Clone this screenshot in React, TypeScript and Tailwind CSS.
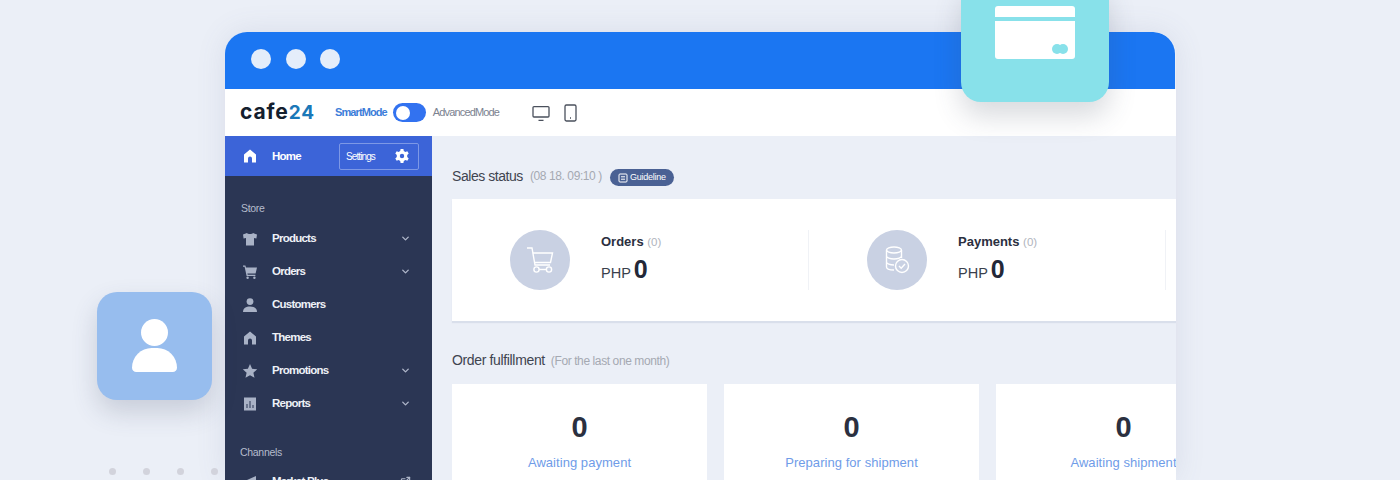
import { ChevronDown, ExternalLink } from "lucide-react";
import type { ReactNode } from "react";

const icon = "h-[16px] w-[16px] fill-[#a9b2c6]";

const HomeIcon = ({ className = icon }: { className?: string }) => (
  <svg viewBox="0 0 16 16" className={className}>
    <path d="M8 1.5 14 6.6V14.5H10V10.5A2 2 0 0 0 6 10.5V14.5H2V6.6Z" />
  </svg>
);

const ShirtIcon = () => (
  <svg viewBox="0 0 16 16" className={icon}>
    <path d="M5 2 1 3.5 1.6 7.5 4 7V14.5H12V7L14.4 7.5 15 3.5 11 2C10.4 3.4 5.6 3.4 5 2Z" />
  </svg>
);

const CartIcon = () => (
  <svg viewBox="0 0 16 16" className={icon}>
    <path d="M1 1.5H3.4L4 3.5H15L13.6 9.5H5.4L5.7 10.8H13.4V12H4.6L2.6 2.7H1Z" />
    <circle cx="5.6" cy="13.8" r="1.2" />
    <circle cx="12.4" cy="13.8" r="1.2" />
  </svg>
);

const UserIcon = () => (
  <svg viewBox="0 0 16 16" className={icon}>
    <circle cx="8" cy="4.6" r="3.4" />
    <path d="M1 15C1 11.4 4 9.6 8 9.6S15 11.4 15 15Z" />
  </svg>
);

const StarIcon = () => (
  <svg viewBox="0 0 16 16" className={icon}>
    <path d="M8 1 10.1 5.8 15.2 6.3 11.4 9.7 12.5 14.8 8 12.2 3.5 14.8 4.6 9.7 .8 6.3 5.9 5.8Z" />
  </svg>
);

const ReportIcon = () => (
  <svg viewBox="0 0 16 16" className={icon}>
    <path
      fillRule="evenodd"
      d="M2 1.5H14V14.5H2ZM4.5 8V12H5.5V8ZM7.5 5V12H8.5V5ZM10.5 9V12H11.5V9Z"
    />
  </svg>
);

const MegaphoneIcon = () => (
  <svg viewBox="0 0 16 16" className={icon}>
    <path d="M1 6H5L14 2V13L5 10H4V14H2V10H1Z" />
  </svg>
);

const GearIcon = () => (
  <svg viewBox="0 0 16 16" className="h-[16px] w-[16px] fill-white">
    <path
      fillRule="evenodd"
      d="M6.6 1H9.4L9.8 3 11.4 3.9 13.3 3.2 14.7 5.6 13.2 7V9L14.7 10.4 13.3 12.8 11.4 12.1 9.8 13 9.4 15H6.6L6.2 13 4.6 12.1 2.7 12.8 1.3 10.4 2.8 9V7L1.3 5.6 2.7 3.2 4.6 3.9 6.2 3ZM8 5.8A2.2 2.2 0 1 0 8 10.2 2.2 2.2 0 1 0 8 5.8Z"
    />
  </svg>
);

const MonitorIcon = () => (
  <svg viewBox="0 0 18 18" className="h-[18px] w-[18px]" fill="none" stroke="#4a505c" strokeWidth="1.3">
    <rect x="1" y="2.6" width="16" height="10.4" rx="1" />
    <path d="M6.5 16.4H11.5" />
  </svg>
);

const PhoneIcon = () => (
  <svg viewBox="0 0 13 18" className="h-[18px] w-[13px]" fill="none" stroke="#4a505c" strokeWidth="1.3">
    <rect x="1" y="1" width="11" height="16" rx="1.4" />
    <path d="M6 14H7" />
  </svg>
);

const BasketIcon = () => (
  <svg viewBox="0 0 30 30" className="h-[30px] w-[30px]" fill="none" stroke="white" strokeWidth="1.4">
    <path d="M2 3H7L10 20H25" />
    <path d="M7.8 8H27.5L25.5 17.5H9.4" />
    <circle cx="11.5" cy="24.5" r="2.6" />
    <circle cx="24" cy="24.5" r="2.6" />
    <path d="M14 24.5H21.4" />
  </svg>
);

const DatabaseCheckIcon = () => (
  <svg viewBox="0 0 32 32" className="h-[32px] w-[32px]" fill="none" stroke="white" strokeWidth="1.4">
    <ellipse cx="13" cy="6" rx="7.5" ry="3" />
    <path d="M5.5 6V23C5.5 24.6 8.5 26 13 26M20.5 6V14M5.5 12C5.5 13.7 9 15 13 15S20.5 13.7 20.5 12M5.5 18C5.5 19.7 9 21 13 21" />
    <circle cx="21" cy="22" r="6.5" fill="#c9d1e3" />
    <path d="M18 22 20.2 24.2 24 20" />
  </svg>
);

const GuideIcon = () => (
  <svg viewBox="0 0 10 10" className="h-[10px] w-[10px]" fill="none" stroke="white" strokeWidth="1">
    <rect x="1" y="1" width="8" height="8" rx="1" />
    <path d="M3 3.8H7M3 6.2H7" />
  </svg>
);

type NavItem = { label: string; icon: ReactNode; more?: boolean };

const storeItems: NavItem[] = [
  { label: "Products", icon: <ShirtIcon />, more: true },
  { label: "Orders", icon: <CartIcon />, more: true },
  { label: "Customers", icon: <UserIcon /> },
  { label: "Themes", icon: <HomeIcon /> },
  { label: "Promotions", icon: <StarIcon />, more: true },
  { label: "Reports", icon: <ReportIcon />, more: true },
];

function NavRow({ item }: { item: NavItem }) {
  return (
    <div className="flex h-[33px] items-center pl-[17px] pr-[21px]">
      <span className="flex w-[30px] shrink-0">{item.icon}</span>
      <span className="flex-1 text-[11.5px] font-bold tracking-[-0.75px] text-[#eef1f7]">{item.label}</span>
      {item.more && <ChevronDown className="h-[11px] w-[11px] text-[#aeb6c9]" strokeWidth={3} />}
    </div>
  );
}

function Sidebar() {
  return (
    <aside className="w-[207px] shrink-0 bg-[#2b3654]">
      <div className="flex h-[40px] items-center bg-[#3c64d8] pl-[17px] pr-[13px]">
        <span className="flex w-[30px] shrink-0">
          <HomeIcon className="h-[16px] w-[16px] fill-white" />
        </span>
        <span className="flex-1 pt-[2px] text-[11.5px] font-bold tracking-[-0.75px] text-white">Home</span>
        <div className="flex h-[27px] w-[80px] items-center justify-between rounded-[2px] border border-[#7d98e6] pl-[6px] pr-[8px]">
          <span className="text-[10px] tracking-[-0.9px] text-white">Settings</span>
          <GearIcon />
        </div>
      </div>
      <div className="pl-[16px] pt-[26px] text-[10.5px] leading-[13px] tracking-[-0.3px] text-[#b5bccd]">Store</div>
      <div className="mt-[7px]">
        {storeItems.map((item) => (
          <NavRow key={item.label} item={item} />
        ))}
      </div>
      <div className="pl-[15px] pt-[26px] text-[10.5px] leading-[13px] tracking-[-0.3px] text-[#b5bccd]">Channels</div>
      <div className="mt-[6px] flex h-[33px] items-center pl-[17px] pr-[21px]">
        <span className="flex w-[30px] shrink-0">
          <MegaphoneIcon />
        </span>
        <span className="flex-1 text-[11.5px] font-bold tracking-[-0.75px] text-[#eef1f7]">Market Plus</span>
        <ExternalLink className="h-[11px] w-[11px] text-[#aeb6c9]" strokeWidth={2.5} />
      </div>
    </aside>
  );
}

function StatCell({ title, icon }: { title: string; icon: ReactNode }) {
  return (
    <div className="flex h-[60px] w-[357px] shrink-0 items-center border-r border-[#f0f2f6] pl-[58px]">
      <div className="flex h-[60px] w-[60px] shrink-0 items-center justify-center rounded-full bg-[#c9d1e3]">{icon}</div>
      <div className="mb-[2px] ml-[31px]">
        <div className="text-[13px] font-bold leading-[16px] text-[#2b3040]">
          {title} <span className="text-[11.5px] font-normal text-[#b0b4bd]">(0)</span>
        </div>
        <div className="mt-[5px] flex items-baseline text-[#3a3f4c]">
          <span className="text-[14.5px]">PHP</span>
          <span className="ml-[3px] text-[25px] font-bold leading-[28px] text-[#232838]">0</span>
        </div>
      </div>
    </div>
  );
}

function CountCard({ label }: { label: string }) {
  return (
    <div className="h-[110px] w-[255px] shrink-0 bg-white pt-[26px] text-center">
      <div className="text-[29px] font-bold leading-[34px] text-[#2b3040]">0</div>
      <div className="mt-[11px] whitespace-nowrap text-[13px] leading-[16px] tracking-[0.05px] text-[#6f9ce8]">{label}</div>
    </div>
  );
}

export default function App() {
  return (
    <div className="relative h-[480px] w-[1400px] overflow-hidden bg-[#ebeff7] font-['Liberation_Sans',Arial,sans-serif]">
      <div className="ml-[225px] pt-[32px]">
        <div className="h-[448px] w-[951px] overflow-hidden rounded-t-[22px] shadow-[0_0_30px_rgba(90,100,140,0.12)]">
          <div className="flex h-[57px] w-[950px] items-center gap-[14.5px] rounded-tr-[22px] bg-[#1b76f2] pb-[3px] pl-[26px]">
            <span className="h-[20px] w-[20px] rounded-full bg-[#e4edfa]" />
            <span className="h-[20px] w-[20px] rounded-full bg-[#e4edfa]" />
            <span className="h-[20px] w-[20px] rounded-full bg-[#e4edfa]" />
          </div>
          <div className="flex h-[47px] items-center bg-white pl-[15px]">
            <div className="flex w-[95px] items-baseline font-['Inter',sans-serif] text-[21px] font-bold leading-[24px] tracking-[0.9px] text-[#14202e]">
              cafe<span className="text-[19px] text-[#1a78b8]">24</span>
            </div>
            <span className="text-[11px] font-bold tracking-[-0.9px] text-[#3c7dd9]">SmartMode</span>
            <div className="ml-[6px] flex h-[19px] w-[33px] items-center rounded-full bg-[#3272f0] pl-[3px]">
              <span className="h-[14px] w-[14px] rounded-full bg-white" />
            </div>
            <span className="ml-[7px] text-[11px] tracking-[-0.85px] text-[#7b8290]">AdvancedMode</span>
            <span className="ml-[33px] flex">
              <MonitorIcon />
            </span>
            <span className="ml-[14px] flex">
              <PhoneIcon />
            </span>
          </div>
          <div className="flex h-[344px]">
            <Sidebar />
            <main className="w-[744px] shrink-0 overflow-hidden bg-[#ebeff7] pl-[20px]">
              <div className="flex h-[63px] items-end pb-[15px]">
                <span className="text-[14px] leading-[16px] tracking-[-0.45px] text-[#3f4450]">Sales status</span>
                <span className="ml-[7px] text-[12px] leading-[16px] tracking-[-0.4px] text-[#a5a9b2]">(08 18. 09:10 )</span>
                <span className="mb-[-2px] ml-[8px] flex h-[17px] items-center gap-[2px] rounded-full bg-[#4a6194] px-[8px] text-[9px] tracking-[-0.25px] text-white">
                  <GuideIcon />
                  Guideline
                </span>
              </div>
              <div className="flex h-[122px] w-[724px] items-center overflow-hidden bg-white shadow-[0_2px_1px_#d9dfeb]">
                <StatCell title="Orders" icon={<BasketIcon />} />
                <StatCell title="Payments" icon={<DatabaseCheckIcon />} />
              </div>
              <div className="mt-[31px] flex items-baseline">
                <span className="text-[14px] leading-[16px] tracking-[-0.35px] text-[#3f4450]">Order fulfillment</span>
                <span className="ml-[6px] text-[12px] leading-[16px] tracking-[-0.4px] text-[#a5a9b2]">(For the last one month)</span>
              </div>
              <div className="mt-[15px] flex w-[724px] gap-[17px] overflow-hidden">
                <CountCard label="Awaiting payment" />
                <CountCard label="Preparing for shipment" />
                <CountCard label="Awaiting shipment" />
              </div>
            </main>
          </div>
        </div>
      </div>

      {/* floating tiles sit over the window */}
      <div className="absolute left-[961px] top-[-20px] flex h-[122px] w-[148px] items-start justify-center rounded-[20px] bg-[#88e1ea] pt-[26px] shadow-[0_14px_28px_rgba(60,70,90,0.2)]">
        <div className="relative h-[53px] w-[80px] overflow-hidden rounded-[3px] bg-white">
          <div className="mt-[11px] h-[4px] bg-[#88e1ea]" />
          <span className="absolute bottom-[5px] right-[13px] h-[10px] w-[10px] rounded-full bg-[#88e1ea]" />
          <span className="absolute bottom-[5px] right-[7px] h-[10px] w-[10px] rounded-full bg-[#88e1ea]" />
        </div>
      </div>
      <div className="absolute left-[97px] top-[292px] flex h-[108px] w-[115px] flex-col items-center rounded-[20px] bg-[#97bdee] pt-[27px] shadow-[0_12px_26px_rgba(60,70,100,0.2)]">
        <span className="h-[27px] w-[27px] rounded-full bg-white" />
        <span className="mt-[2px] h-[24px] w-[45px] rounded-t-[23px] rounded-b-[5px] bg-white" />
      </div>
      <div className="absolute left-[109px] top-[468px] flex gap-[27px]">
        <span className="h-[7px] w-[7px] rounded-full bg-[#d2d3dc]" />
        <span className="h-[7px] w-[7px] rounded-full bg-[#d2d3dc]" />
        <span className="h-[7px] w-[7px] rounded-full bg-[#d2d3dc]" />
        <span className="h-[7px] w-[7px] rounded-full bg-[#d2d3dc]" />
      </div>
    </div>
  );
}
